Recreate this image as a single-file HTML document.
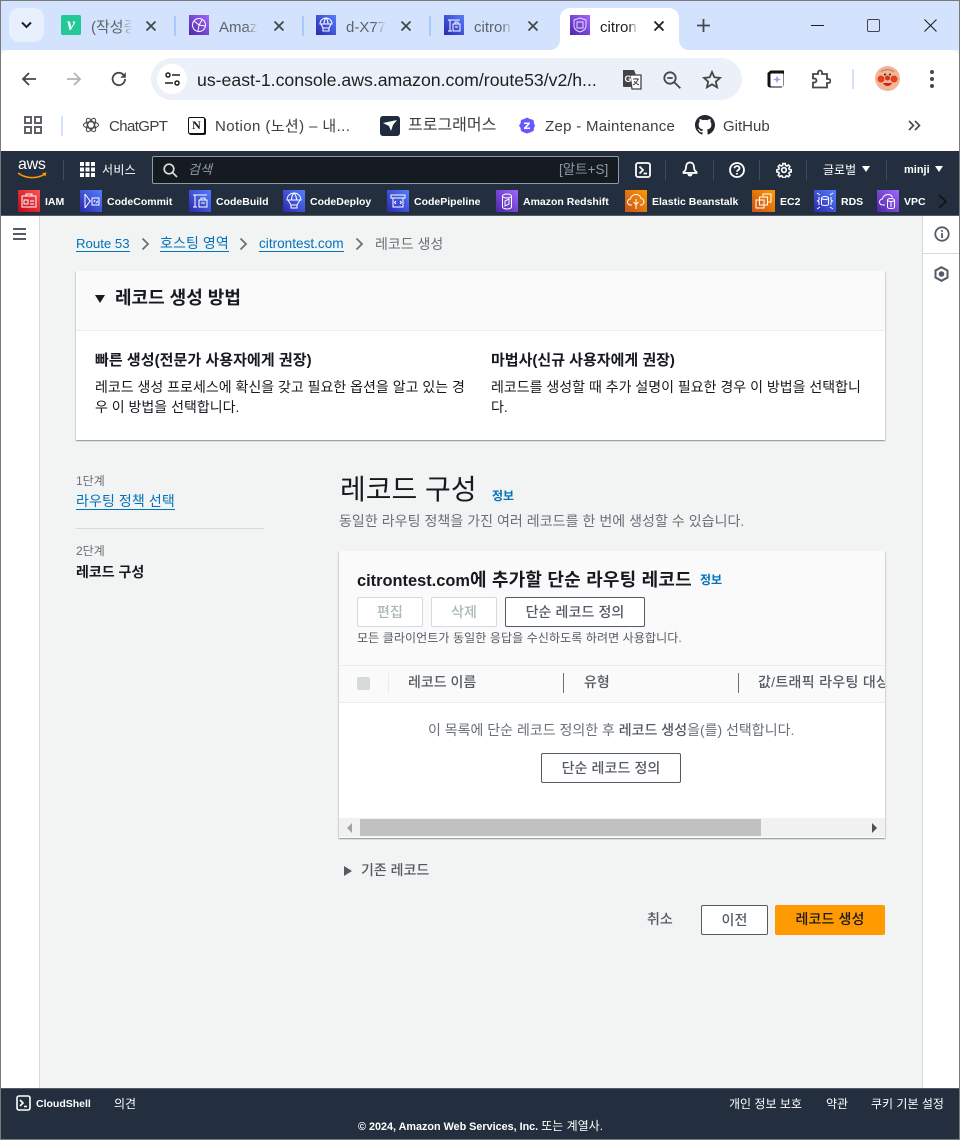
<!DOCTYPE html>
<html lang="ko"><head><meta charset="utf-8"><title>citron</title>
<style>
*{box-sizing:border-box}
html,body{margin:0;padding:0;width:960px;height:1140px;overflow:hidden;background:#f2f3f3}
body{position:relative;font-family:"Liberation Sans","Noto Sans CJK KR",sans-serif;font-size:14px;color:#16191f}
.b,.t,svg.a{position:absolute}
.t{white-space:nowrap;line-height:20px;height:20px}
.fade{overflow:hidden}
.fade:after{content:"";position:absolute;right:0;top:0;bottom:0;width:12px;background:linear-gradient(90deg,rgba(211,227,253,0),#d3e3fd)}
.ic{position:absolute;width:22px;height:22px;top:190px}
.fav{color:#fff;font-size:10.500px;font-weight:bold;top:192px}
.lnk{color:#0073bb;border-bottom:1px solid #0073bb;height:auto;line-height:15px;padding-top:1px}
.btn{position:absolute;background:#fff;border-radius:2px;text-align:center;font-weight:500;font-size:14px;letter-spacing:.1px}
.bm{font-size:15px;color:#3c4043;top:117px}
.nav{color:#fff;font-size:12px;font-weight:normal}
.sep{position:absolute;width:1px;background:#414d5c}
.tabsep{position:absolute;width:2px;height:20px;top:16px;background:#a8c7fa;border-radius:1px}
</style></head><body>

<!-- Tab strip -->
<div class="b" style="left:0;top:0;width:960px;height:50px;background:#d3e3fd"></div>
<div class="b" style="left:9px;top:8px;width:35px;height:34px;border-radius:10px;background:#e9f0fd"></div>
<svg class="a" style="left:20px;top:20px" width="13" height="10" viewBox="0 0 13 10"><path d="M2 2.500l4.500 4.500 4.500-4.500" fill="none" stroke="#1f1f1f" stroke-width="2"/></svg>

<div class="b" style="left:61px;top:15px;width:20px;height:20px;background:#20c997;border-radius:2px;color:#fff;font:italic bold 18px/18px 'Liberation Serif',serif;text-align:center">v</div>
<div class="t fade" style="left:91px;top:18px;width:41px;color:#5f6368;font-size:15px">(작성중)</div>
<svg class="a" style="left:145px;top:20px" width="12" height="12" viewBox="0 0 12 12"><path d="M1.500 1.500l9 9M10.500 1.500l-9 9" stroke="#474747" stroke-width="1.800"/></svg>
<div class="tabsep" style="left:174px"></div>

<div class="b" style="left:189px;top:15px;width:20px;height:20px;background:linear-gradient(45deg,#4d27a8,#a166ff)"></div>
<svg class="a" style="left:189px;top:15px" width="20" height="20" viewBox="0 0 20 20" fill="none" stroke="#fff" stroke-width="1"><circle cx="10" cy="10" r="6.500"/><path d="M5 6l5 4 3-5M10 10l-1 6M10 10l6 1"/></svg>
<div class="t fade" style="left:219px;top:18px;width:39px;color:#5f6368;font-size:15px">Amazon</div>
<svg class="a" style="left:273px;top:20px" width="12" height="12" viewBox="0 0 12 12"><path d="M1.500 1.500l9 9M10.500 1.500l-9 9" stroke="#474747" stroke-width="1.800"/></svg>
<div class="tabsep" style="left:302px"></div>

<div class="b" style="left:316px;top:15px;width:20px;height:20px;background:linear-gradient(45deg,#2e27ad,#527fff)"></div>
<svg class="a" style="left:316px;top:15px" width="20" height="20" viewBox="0 0 20 20" fill="none" stroke="#fff" stroke-width="1.100"><path d="M4 9a6 6 0 0 1 12 0zM8 9c0-3 1-5 2-6 1 1 2 3 2 6M5 9l2 4h6l2-4M7 13v3h6v-3"/></svg>
<div class="t fade" style="left:346px;top:18px;width:40px;color:#5f6368;font-size:15px">d-X77XX</div>
<svg class="a" style="left:400px;top:20px" width="12" height="12" viewBox="0 0 12 12"><path d="M1.500 1.500l9 9M10.500 1.500l-9 9" stroke="#474747" stroke-width="1.800"/></svg>
<div class="tabsep" style="left:429px"></div>

<div class="b" style="left:444px;top:15px;width:20px;height:20px;background:linear-gradient(45deg,#2e27ad,#527fff)"></div>
<svg class="a" style="left:444px;top:15px" width="20" height="20" viewBox="0 0 20 20" fill="none" stroke="#fff" stroke-width="1"><path d="M4 5h12M6 5v11M4 16h4M9 9h7v7H9zM11 9V7h3v2M11 12h3"/></svg>
<div class="t fade" style="left:474px;top:18px;width:39px;color:#5f6368;font-size:15px">citron</div>
<svg class="a" style="left:527px;top:20px" width="12" height="12" viewBox="0 0 12 12"><path d="M1.500 1.500l9 9M10.500 1.500l-9 9" stroke="#474747" stroke-width="1.800"/></svg>

<!-- active tab -->
<div class="b" style="left:560px;top:8px;width:119px;height:43px;background:#fff;border-radius:10px 10px 0 0"></div>
<svg class="a" style="left:550px;top:40px" width="10" height="10" viewBox="0 0 10 10"><path d="M0 10a10 10 0 0 0 10-10v10z" fill="#fff"/></svg>
<svg class="a" style="left:679px;top:40px" width="10" height="10" viewBox="0 0 10 10"><path d="M10 10a10 10 0 0 1-10-10v10z" fill="#fff"/></svg>
<div class="b" style="left:570px;top:15px;width:20px;height:20px;background:linear-gradient(45deg,#4d27a8,#a166ff)"></div>
<svg class="a" style="left:570px;top:15px" width="20" height="20" viewBox="0 0 20 20" fill="none" stroke="#e8dcff" stroke-width="1"><path d="M10 3l6 2v6c0 3-3 5-6 6-3-1-6-3-6-6V5zM7 7h6v6H7z"/></svg>
<div class="t" style="left:600px;top:18px;width:38px;overflow:hidden;color:#1f1f1f;font-size:15px;-webkit-mask-image:linear-gradient(90deg,#000 75%,transparent)">citrontest</div>
<svg class="a" style="left:653px;top:20px" width="12" height="12" viewBox="0 0 12 12"><path d="M1.500 1.500l9 9M10.500 1.500l-9 9" stroke="#1f1f1f" stroke-width="1.800"/></svg>
<svg class="a" style="left:696px;top:18px" width="15" height="15" viewBox="0 0 15 15"><path d="M7.500 1v13M1 7.500h13" stroke="#474747" stroke-width="1.800"/></svg>

<!-- window controls -->
<div class="b" style="left:811px;top:25px;width:13px;height:1px;background:#1f1f1f"></div>
<div class="b" style="left:867px;top:19px;width:13px;height:13px;border:1.500px solid #444;border-radius:2px"></div>
<svg class="a" style="left:924px;top:19px" width="13" height="13" viewBox="0 0 13 13"><path d="M.5.5l12 12M12.500.5l-12 12" stroke="#1f1f1f" stroke-width="1.100"/></svg>

<!-- Toolbar -->
<div class="b" style="left:1px;top:50px;width:958px;height:101px;background:#fff;border-radius:8px 8px 0 0"></div>
<svg class="a" style="left:20px;top:70px" width="18" height="18" viewBox="0 0 18 18"><path d="M16 9H3M9 3L3 9l6 6" fill="none" stroke="#474747" stroke-width="1.800"/></svg>
<svg class="a" style="left:65px;top:70px" width="18" height="18" viewBox="0 0 18 18"><path d="M2 9h13M9 3l6 6-6 6" fill="none" stroke="#b0b3b6" stroke-width="1.800"/></svg>
<svg class="a" style="left:110px;top:70px" width="18" height="18" viewBox="0 0 18 18"><path d="M15 9a6.200 6.200 0 1 1-1.800-4.400L15 6.500" fill="none" stroke="#474747" stroke-width="1.800"/><path d="M15.800 2.200v5.500h-5.500z" fill="#474747"/></svg>

<div class="b" style="left:151px;top:58px;width:591px;height:42px;border-radius:21px;background:#ecf1f9"></div>
<div class="b" style="left:157px;top:64px;width:30px;height:30px;border-radius:15px;background:#fff"></div>
<svg class="a" style="left:164px;top:71px" width="17" height="16" viewBox="0 0 17 16" fill="none" stroke="#1f1f1f" stroke-width="1.500"><circle cx="4" cy="4" r="2"/><path d="M8 4h8M1 12h8"/><circle cx="13" cy="12" r="2"/></svg>
<div class="t" style="left:197px;top:70px;font-size:17.680px;color:#1f1f1f">us-east-1.console.aws.amazon.com/route53/v2/h...</div>

<svg class="a" style="left:621px;top:69px" width="22" height="22" viewBox="0 0 22 22"><path d="M2 1h11l2 5v12H3a1 1 0 0 1-1-1z" fill="#444"/><path d="M9 6h11v14H11z" fill="#fff" stroke="#444" stroke-width="1.300"/><text x="3.500" y="13" font-size="9" font-weight="bold" fill="#fff" font-family="Liberation Sans">G</text><path d="M12 10h6M15 9v1M17 10c-1 3-3 5-5 6M13 12c1 2 3 3 5 4" fill="none" stroke="#444"/></svg>
<svg class="a" style="left:662px;top:70px" width="20" height="20" viewBox="0 0 20 20" fill="none" stroke="#474747" stroke-width="1.800"><circle cx="8" cy="8" r="5.700"/><path d="M5.300 8h5.400M12.300 12.300l6 6"/></svg>
<svg class="a" style="left:702px;top:70px" width="20" height="19" viewBox="0 0 20 19"><path d="M10 2l2.400 5.300 5.700.6-4.300 3.800 1.300 5.600-5.100-3-5.100 3 1.300-5.600L2 7.900l5.700-.6z" fill="none" stroke="#474747" stroke-width="1.800"/></svg>

<svg class="a" style="left:766px;top:69px" width="20" height="20" viewBox="0 0 20 20"><path d="M1.500 4l3-2.500H18v15l-2.500 2H4a2.500 2.500 0 0 1-2.500-2.500z" fill="#111"/><rect x="4.500" y="4.500" width="13" height="13" rx="1" fill="#fff"/><path d="M11 6.500l1 3 3 1-3 1-1 3-1-3-3-1 3-1z" fill="#b78bf5"/></svg>
<svg class="a" style="left:811px;top:69px" width="20" height="20" viewBox="0 0 20 20"><path d="M2 5h5V3.500a2 2 0 0 1 4 0V5h5v5h1.500a2 2 0 0 1 0 4H16v4.500H2v-5h1.500a2 2 0 0 0 0-4H2z" fill="none" stroke="#474747" stroke-width="1.800"/></svg>
<div class="b" style="left:852px;top:69px;width:2px;height:20px;background:#d3e3fd"></div>
<svg class="a" style="left:875px;top:66px" width="25" height="25" viewBox="0 0 25 25"><circle cx="12.500" cy="12.500" r="12.500" fill="#f2b596"/><path d="M6 6c2-3 11-3 13 0" fill="none" stroke="#b9745a"/><circle cx="6" cy="13" r="3.500" fill="#e2401f"/><circle cx="19" cy="13" r="3.500" fill="#e2401f"/><circle cx="12.500" cy="12" r="2.500" fill="#d8321a"/><path d="M8 17c2 4 7 4 9 0z" fill="#c22"/><circle cx="10" cy="8.500" r="1" fill="#222"/><circle cx="15" cy="8.500" r="1" fill="#222"/></svg>
<div class="b" style="left:930px;top:70px;width:4px;height:4px;border-radius:2px;background:#474747"></div>
<div class="b" style="left:930px;top:77px;width:4px;height:4px;border-radius:2px;background:#474747"></div>
<div class="b" style="left:930px;top:84px;width:4px;height:4px;border-radius:2px;background:#474747"></div>

<!-- Bookmarks -->
<svg class="a" style="left:24px;top:116px" width="19" height="19" viewBox="0 0 19 19" fill="none" stroke="#5f6368" stroke-width="2"><rect x="1" y="1" width="6" height="6"/><rect x="11" y="1" width="6" height="6"/><rect x="1" y="11" width="6" height="6"/><rect x="11" y="11" width="6" height="6"/></svg>
<div class="b" style="left:61px;top:116px;width:2px;height:20px;background:#d3e3fd"></div>
<svg class="a" style="left:83px;top:117px" width="16" height="16" viewBox="0 0 16 16" fill="none" stroke="#444" stroke-width="1"><circle cx="8" cy="8" r="3.500"/><ellipse cx="8" cy="8" rx="7.500" ry="3.200"/><ellipse cx="8" cy="8" rx="7.500" ry="3.200" transform="rotate(60 8 8)"/><ellipse cx="8" cy="8" rx="7.500" ry="3.200" transform="rotate(120 8 8)"/></svg>
<div class="t bm" style="left:109px;letter-spacing:-.6px">ChatGPT</div>
<div class="b" style="left:188px;top:117px;width:17px;height:17px;background:#fff;border:1.500px solid #111;border-radius:2px;box-shadow:1px 1px 0 #111;font:bold 12px/14px 'Liberation Serif',serif;text-align:center;color:#111">N</div>
<div class="t bm" style="left:215px;letter-spacing:.4px">Notion (노션) – 내...</div>
<div class="b" style="left:380px;top:116px;width:20px;height:20px;background:#202b3d;border-radius:3px"></div>
<svg class="a" style="left:380px;top:116px" width="20" height="20" viewBox="0 0 20 20"><path d="M3 7l14-3-4 5-2 6-2-5z" fill="#fff"/></svg>
<div class="t bm" style="left:408px;top:116px;font-size:16px">프로그래머스</div>
<svg class="a" style="left:519px;top:117px" width="16" height="17" viewBox="0 0 16 17"><path d="M8 .5l3 1.500 3.500 1 .5 3.500 1 2-1 2.500-.5 3-3.500 1.500L8 16.500l-3-1-3-1.500-.5-3L0 8.500l1.500-2L2 3l3-1z" fill="#6758ff"/><path d="M5 5.500h6v1.300L7.500 10.500H11V12H5v-1.300l3.500-3.700H5z" fill="#fff"/></svg>
<div class="t bm" style="left:545px;letter-spacing:.3px">Zep - Maintenance</div>
<svg class="a" style="left:695px;top:115px" width="20" height="20" viewBox="0 0 16 16"><path fill="#24292f" d="M8 0C3.580 0 0 3.580 0 8c0 3.540 2.290 6.530 5.470 7.590.4.070.55-.17.55-.38 0-.19-.01-.82-.01-1.490-2.010.37-2.530-.49-2.690-.94-.09-.23-.48-.94-.82-1.130-.28-.15-.68-.52-.01-.53.630-.01 1.080.58 1.230.82.720 1.210 1.870.870 2.330.660.070-.52.280-.870.510-1.070-1.780-.2-3.640-.89-3.640-3.950 0-.87.310-1.590.820-2.150-.08-.2-.36-1.020.08-2.120 0 0 .67-.21 2.200.820.640-.18 1.320-.27 2-.27s1.360.09 2 .27c1.530-1.040 2.200-.82 2.200-.82.440 1.100.160 1.920.080 2.120.510.560.820 1.270.820 2.150 0 3.070-1.870 3.750-3.650 3.950.29.250.54.730.54 1.480 0 1.070-.01 1.930-.01 2.200 0 .21.150.46.550.38A8.013 8.013 0 0 0 16 8c0-4.420-3.580-8-8-8z"/></svg>
<div class="t bm" style="left:723px">GitHub</div>
<svg class="a" style="left:908px;top:120px" width="13" height="11" viewBox="0 0 13 11" fill="none" stroke="#474747" stroke-width="1.600"><path d="M1 1l4.500 4.500L1 10M7 1l4.500 4.500L7 10"/></svg>

<!-- AWS nav -->
<div class="b" style="left:0;top:151px;width:960px;height:65px;background:#232f3e;border-bottom:1px solid #545b64"></div>
<div class="t" style="left:18px;top:156px;color:#fff;font-size:16px;font-weight:normal;letter-spacing:-.3px;line-height:18px;height:18px">aws</div>
<svg class="a" style="left:17px;top:172px" width="31" height="8" viewBox="0 0 31 8"><path d="M1 1c8 6 19 6 27 1" fill="none" stroke="#f90" stroke-width="1.600"/><path d="M25 1l4.500-.5-1 4z" fill="#f90"/></svg>
<div class="sep" style="left:63px;top:160px;height:20px"></div>
<svg class="a" style="left:80px;top:162px" width="15" height="15" viewBox="0 0 15 15" fill="#fff"><rect width="4" height="4"/><rect x="5.500" width="4" height="4"/><rect x="11" width="4" height="4"/><rect y="5.500" width="4" height="4"/><rect x="5.500" y="5.500" width="4" height="4"/><rect x="11" y="5.500" width="4" height="4"/><rect y="11" width="4" height="4"/><rect x="5.500" y="11" width="4" height="4"/><rect x="11" y="11" width="4" height="4"/></svg>
<div class="t nav" style="left:102px;top:160px;letter-spacing:.3px">서비스</div>
<div class="b" style="left:152px;top:156px;width:467px;height:28px;background:#161b22;border:1px solid #8d9aa7;border-radius:2px"></div>
<svg class="a" style="left:163px;top:163px" width="15" height="15" viewBox="0 0 15 15" fill="none" stroke="#d5dbdb" stroke-width="1.700"><circle cx="6" cy="6" r="4.800"/><path d="M9.500 9.500l4.500 4.500"/></svg>
<div class="t" style="left:188px;top:160px;color:#8d9aa7;font-size:13px;font-style:italic">검색</div>
<div class="t" style="left:559px;top:160px;color:#8d9aa7;font-size:13.500px">[알트+S]</div>

<svg class="a" style="left:635px;top:162px" width="16" height="16" viewBox="0 0 16 16" fill="none" stroke="#fff" stroke-width="1.800"><rect x="1" y="1" width="14" height="14" rx="2"/><path d="M4.500 4.500L8 8l-3.500 3.500M8.500 11.500H12"/></svg>
<div class="sep" style="left:665px;top:160px;height:20px"></div>
<svg class="a" style="left:682px;top:161px" width="16" height="17" viewBox="0 0 16 17"><path d="M8 1.500c3 0 4 2.500 4 5 0 2 1 3.500 2.500 4.500v1H1.500v-1C3 10 4 8.500 4 6.500c0-2.500 1-5 4-5z" fill="none" stroke="#fff" stroke-width="1.800"/><path d="M5.500 13h5a2.500 2.500 0 0 1-5 0z" fill="#fff"/><path d="M1.500 11h13v1.500h-13z" fill="#fff"/></svg>
<div class="sep" style="left:713px;top:160px;height:20px"></div>
<svg class="a" style="left:729px;top:162px" width="16" height="16" viewBox="0 0 16 16" fill="none" stroke="#fff" stroke-width="1.800"><circle cx="8" cy="8" r="7"/><path d="M5.500 6.200C5.500 4.800 6.700 4 8 4s2.500.8 2.500 2.200c0 1.800-2.500 1.800-2.500 3.600"/><path d="M8 11v1.500"/></svg>
<div class="sep" style="left:759px;top:160px;height:20px"></div>
<svg class="a" style="left:776px;top:162px" width="16" height="16" viewBox="0 0 16 16" fill="none" stroke="#fff" stroke-width="1.700"><circle cx="8" cy="8" r="2.300"/><path d="M6.800 1h2.400l.4 2 1.300.6 1.800-1 1.600 1.700-1.100 1.700.5 1.300 2 .4v2.400l-2 .4-.5 1.300 1.100 1.700-1.600 1.700-1.800-1-1.300.6-.4 2H6.800l-.4-2-1.300-.6-1.800 1-1.600-1.700 1.100-1.700-.5-1.300-2-.4V7.700l2-.4.5-1.300L1.700 4.300l1.600-1.700 1.800 1 1.300-.6z" transform="translate(.6 .6) scale(.93)"/></svg>
<div class="sep" style="left:806px;top:160px;height:20px"></div>
<div class="t nav" style="left:823px;top:160px">글로벌</div>
<svg class="a" style="left:862px;top:166px" width="8" height="6" viewBox="0 0 8 6"><path d="M0 0h8L4 6z" fill="#fff"/></svg>
<div class="sep" style="left:886px;top:160px;height:20px"></div>
<div class="t nav" style="left:904px;top:160px;font-size:11px;font-weight:bold">minji</div>
<svg class="a" style="left:935px;top:166px" width="8" height="6" viewBox="0 0 8 6"><path d="M0 0h8L4 6z" fill="#fff"/></svg>

<!-- favorites -->
<div class="ic" style="left:18px;background:linear-gradient(45deg,#bd0816,#ff5252)"></div>
<svg class="ic" style="left:18px" viewBox="0 0 22 22" fill="none" stroke="#fff" stroke-width="1"><rect x="4" y="6" width="14" height="11"/><rect x="6" y="10" width="4" height="4"/><path d="M8 6V4h6v2M12 11h4M12 14h4"/></svg>
<div class="t fav" style="left:45px">IAM</div>
<div class="ic" style="left:80px;background:linear-gradient(45deg,#2e27ad,#527fff)"></div>
<svg class="ic" style="left:80px" viewBox="0 0 22 22" fill="none" stroke="#fff" stroke-width="1"><path d="M5 4l5 7-5 7M5 4v14M10 11h1M12 8h7v7h-7zM14 12l1-2M16 13l2-2"/></svg>
<div class="t fav" style="left:107px">CodeCommit</div>
<div class="ic" style="left:189px;background:linear-gradient(45deg,#2e27ad,#527fff)"></div>
<svg class="ic" style="left:189px" viewBox="0 0 22 22" fill="none" stroke="#fff" stroke-width="1"><path d="M4 5h14M6 5v12M4 17h4M10 10h8v7h-8zM12 10V8h4v2M12 13h4"/></svg>
<div class="t fav" style="left:216px">CodeBuild</div>
<div class="ic" style="left:283px;background:linear-gradient(45deg,#2e27ad,#527fff)"></div>
<svg class="ic" style="left:283px" viewBox="0 0 22 22" fill="none" stroke="#fff" stroke-width="1"><path d="M4 10a7 7 0 0 1 14 0zM8.500 10c0-3 1-5.500 2.500-7 1.500 1.500 2.500 4 2.500 7M5 10l3 5h6l3-5M8 15v3h6v-3"/></svg>
<div class="t fav" style="left:310px">CodeDeploy</div>
<div class="ic" style="left:387px;background:linear-gradient(45deg,#2e27ad,#527fff)"></div>
<svg class="ic" style="left:387px" viewBox="0 0 22 22" fill="none" stroke="#fff" stroke-width="1"><path d="M4 5h14v3H4zM6 8v9h10V8M9 11l-1.500 1.500L9 14M13 11l1.500 1.500L13 14"/></svg>
<div class="t fav" style="left:414px">CodePipeline</div>
<div class="ic" style="left:496px;background:linear-gradient(45deg,#4d27a8,#a166ff)"></div>
<svg class="ic" style="left:496px" viewBox="0 0 22 22" fill="none" stroke="#fff" stroke-width="1"><ellipse cx="11" cy="6" rx="4.500" ry="2"/><path d="M6.500 6v11c0 1 2 2 4.500 2s4.500-1 4.500-2V6M9 11l4-2v5l-4 2z"/></svg>
<div class="t fav" style="left:523px">Amazon Redshift</div>
<div class="ic" style="left:625px;background:linear-gradient(45deg,#c8511b,#ff9900)"></div>
<svg class="ic" style="left:625px" viewBox="0 0 22 22" fill="none" stroke="#fff" stroke-width="1"><path d="M7 15H5.500a3 3 0 0 1 0-6c.5-3 3-4.500 5.500-4.500s4.500 1.500 5 4a3.300 3.300 0 0 1 .5 6.500H15M11 9v10M8.500 12l2.500 2.500 2.500-2.500"/></svg>
<div class="t fav" style="left:652px">Elastic Beanstalk</div>
<div class="ic" style="left:752px;width:23px;background:linear-gradient(45deg,#c8511b,#ff9900)"></div>
<svg class="ic" style="left:752px" viewBox="0 0 22 22" fill="none" stroke="#fff" stroke-width="1"><rect x="4" y="10" width="8" height="8"/><rect x="7.500" y="7" width="8" height="8"/><path d="M11 7V4h8v8h-3"/></svg>
<div class="t fav" style="left:780px">EC2</div>
<div class="ic" style="left:814px;background:linear-gradient(45deg,#2e27ad,#527fff)"></div>
<svg class="ic" style="left:814px" viewBox="0 0 22 22" fill="none" stroke="#fff" stroke-width="1"><ellipse cx="11" cy="8" rx="3.500" ry="1.500"/><path d="M7.500 8v6c0 1 1.500 1.500 3.500 1.500s3.500-.5 3.500-1.500V8M5 7v3l-1.500 1L5 12v3M17 7v3l1.500 1-1.500 1v3M3 3l3 2M19 3l-3 2M3 19l3-2M19 19l-3-2"/></svg>
<div class="t fav" style="left:841px">RDS</div>
<div class="ic" style="left:877px;background:linear-gradient(45deg,#4d27a8,#a166ff)"></div>
<svg class="ic" style="left:877px" viewBox="0 0 22 22" fill="none" stroke="#fff" stroke-width="1"><path d="M8 15H5.500a3 3 0 0 1 0-6C6 6 8.500 4.500 11 4.500s4 1.500 4.500 3"/><ellipse cx="14" cy="10" rx="3.500" ry="1.500"/><path d="M10.500 10v7c0 1 1.500 1.500 3.500 1.500s3.500-.5 3.500-1.500v-7M14 12v5"/></svg>
<div class="t fav" style="left:904px">VPC</div>
<svg class="a" style="left:938px;top:194px" width="10" height="15" viewBox="0 0 10 15"><path d="M1 1l7 6.500L1 14" fill="none" stroke="#0f1419" stroke-width="1.600"/></svg>

<!-- Side rails -->
<div class="b" style="left:0;top:216px;width:40px;height:872px;background:#fff;border-right:1px solid #d5dbdb"></div>
<div class="b" style="left:922px;top:216px;width:38px;height:872px;background:#fff;border-left:1px solid #d5dbdb"></div>
<div class="b" style="left:923px;top:253px;width:37px;height:1px;background:#d5dbdb"></div>
<svg class="a" style="left:12px;top:227px" width="15" height="14" viewBox="0 0 15 14"><path d="M1 2h13M1 7h13M1 12h13" stroke="#545b64" stroke-width="2"/></svg>
<svg class="a" style="left:934px;top:226px" width="16" height="16" viewBox="0 0 16 16" fill="none" stroke="#545b64" stroke-width="1.800"><circle cx="8" cy="8" r="6.700"/><path d="M8 7v5M8 4v1.800"/></svg>
<svg class="a" style="left:934px;top:266px" width="15" height="16" viewBox="0 0 15 16" fill="none" stroke="#545b64" stroke-width="2"><path d="M7.500 1.200l6 3.300v7l-6 3.300-6-3.300v-7z"/><circle cx="7.500" cy="8" r="1.800" fill="#545b64"/></svg>

<!-- Breadcrumbs -->
<div class="t lnk" style="left:76px;top:235px;font-size:13.200px">Route 53</div>
<svg class="a" style="left:141px;top:237px" width="9" height="14" viewBox="0 0 9 14"><path d="M1.500 1.500L7 7l-5.500 5.500" fill="none" stroke="#687078" stroke-width="1.800"/></svg>
<div class="t lnk" style="left:160px;top:235px;font-size:14px;letter-spacing:.1px">호스팅 영역</div>
<svg class="a" style="left:239px;top:237px" width="9" height="14" viewBox="0 0 9 14"><path d="M1.500 1.500L7 7l-5.500 5.500" fill="none" stroke="#687078" stroke-width="1.800"/></svg>
<div class="t lnk" style="left:259px;top:235px;font-size:13.600px">citrontest.com</div>
<svg class="a" style="left:355px;top:237px" width="9" height="14" viewBox="0 0 9 14"><path d="M1.500 1.500L7 7l-5.500 5.500" fill="none" stroke="#687078" stroke-width="1.800"/></svg>
<div class="t" style="left:375px;top:234px;font-size:14px;color:#687078">레코드 생성</div>

<!-- Method panel -->
<div class="b" style="left:76px;top:271px;width:809px;height:169px;background:#fff;box-shadow:0 1px 1px 0 rgba(0,28,36,.3),1px 1px 1px 0 rgba(0,28,36,.1),-1px 1px 1px 0 rgba(0,28,36,.1)"></div>
<div class="b" style="left:76px;top:271px;width:809px;height:60px;background:#fafafa;border-bottom:1px solid #eaeded"></div>
<svg class="a" style="left:95px;top:295px" width="10" height="8" viewBox="0 0 10 8"><path d="M0 0h10L5 8z" fill="#16191f"/></svg>
<div class="t" style="left:115px;top:288px;font-size:18px;font-weight:bold">레코드 생성 방법</div>
<div class="t" style="left:95px;top:351px;font-size:15px;font-weight:bold;letter-spacing:.05px">빠른 생성(전문가 사용자에게 권장)</div>
<div class="t" style="left:95px;top:377px;font-size:14px">레코드 생성 프로세스에 확신을 갖고 필요한 옵션을 알고 있는 경</div>
<div class="t" style="left:95px;top:397px;font-size:14px">우 이 방법을 선택합니다.</div>
<div class="t" style="left:491px;top:351px;font-size:15px;font-weight:bold">마법사(신규 사용자에게 권장)</div>
<div class="t" style="left:491px;top:377px;font-size:14px">레코드를 생성할 때 추가 설명이 필요한 경우 이 방법을 선택합니</div>
<div class="t" style="left:491px;top:397px;font-size:14px">다.</div>

<!-- Steps -->
<div class="t" style="left:76px;top:471px;font-size:12px;color:#687078">1단계</div>
<div class="t lnk" style="left:76px;top:492px;font-size:14px;line-height:16px;letter-spacing:.1px">라우팅 정책 선택</div>
<div class="b" style="left:76px;top:528px;width:188px;height:1px;background:#d5dbdb"></div>
<div class="t" style="left:76px;top:541px;font-size:12px;color:#687078">2단계</div>
<div class="t" style="left:76px;top:562px;font-size:14px;font-weight:bold">레코드 구성</div>

<!-- Title -->
<div class="t" style="left:340px;top:475px;font-size:28px;line-height:30px;height:30px">레코드 구성</div>
<div class="t" style="left:492px;top:486px;font-size:12px;font-weight:bold;color:#0073bb">정보</div>
<div class="t" style="left:339px;top:511px;font-size:14px;color:#687078;letter-spacing:.05px">동일한 라우팅 정책을 가진 여러 레코드를 한 번에 생성할 수 있습니다.</div>

<!-- Card -->
<div class="b" style="left:339px;top:551px;width:546px;height:287px;background:#fff;box-shadow:0 1px 1px 0 rgba(0,28,36,.3),1px 1px 1px 0 rgba(0,28,36,.1),-1px 1px 1px 0 rgba(0,28,36,.1)"></div>
<div class="b" style="left:339px;top:551px;width:546px;height:152px;background:#fafafa;border-bottom:1px solid #eaeded"></div>
<div class="b" style="left:339px;top:665px;width:546px;height:1px;background:#eaeded"></div>
<div class="t" style="left:357px;top:570px;font-size:16.400px;font-weight:bold">citrontest.com<span style="font-size:18px;letter-spacing:.2px">에 추가할 단순 라우팅 레코드</span></div>
<div class="t" style="left:700px;top:570px;font-size:12px;font-weight:bold;color:#0073bb">정보</div>
<div class="btn" style="left:357px;top:597px;width:66px;height:30px;border:1px solid #d5dbdb;color:#aab7b8;line-height:28px">편집</div>
<div class="btn" style="left:431px;top:597px;width:66px;height:30px;border:1px solid #d5dbdb;color:#aab7b8;line-height:28px">삭제</div>
<div class="btn" style="left:505px;top:597px;width:140px;height:30px;border:1px solid #545b64;color:#545b64;line-height:28px">단순 레코드 정의</div>
<div class="t" style="left:357px;top:628px;font-size:12px;color:#545b64;letter-spacing:.1px">모든 클라이언트가 동일한 응답을 수신하도록 하려면 사용합니다.</div>

<div class="b" style="left:357px;top:677px;width:13px;height:13px;background:#d5dbdb;border-radius:2px"></div>
<div class="b" style="left:388px;top:673px;width:1px;height:20px;background:#eaeded"></div>
<div class="t" style="left:408px;top:672px;font-size:14px;font-weight:500;color:#545b64">레코드 이름</div>
<div class="b" style="left:563px;top:673px;width:1px;height:20px;background:#687078"></div>
<div class="t" style="left:584px;top:672px;font-size:14px;font-weight:500;color:#545b64">유형</div>
<div class="b" style="left:738px;top:673px;width:1px;height:20px;background:#687078"></div>
<div class="t" style="left:758px;top:672px;width:127px;overflow:hidden;font-size:14px;font-weight:500;color:#545b64;letter-spacing:.3px">값/트래픽 라우팅 대상</div>

<div class="t" style="left:428px;top:720px;font-size:14px;color:#687078">이 목록에 단순 레코드 정의한 후 <b style="color:#545b64;font-weight:500">레코드 생성</b>을(를) 선택합니다.</div>
<div class="btn" style="left:541px;top:753px;width:140px;height:30px;border:1px solid #545b64;color:#545b64;line-height:28px">단순 레코드 정의</div>

<!-- Scrollbar -->
<div class="b" style="left:339px;top:818px;width:546px;height:19px;background:#f1f1f1"></div>
<div class="b" style="left:360px;top:819px;width:401px;height:17px;background:#c1c1c1"></div>
<svg class="a" style="left:346px;top:823px" width="7" height="10" viewBox="0 0 7 10"><path d="M6 0v10L1 5z" fill="#a3a3a3"/></svg>
<svg class="a" style="left:871px;top:823px" width="7" height="10" viewBox="0 0 7 10"><path d="M1 0v10l5-5z" fill="#505050"/></svg>

<!-- Existing records -->
<svg class="a" style="left:344px;top:866px" width="8" height="10" viewBox="0 0 8 10"><path d="M0 0v10l8-5z" fill="#545b64"/></svg>
<div class="t" style="left:361px;top:860px;font-size:14px;font-weight:500;color:#545b64">기존 레코드</div>

<!-- Actions -->
<div class="t" style="left:647px;top:909px;font-size:14px;font-weight:500;color:#545b64">취소</div>
<div class="btn" style="left:701px;top:905px;width:67px;height:30px;border:1px solid #545b64;color:#545b64;line-height:28px">이전</div>
<div class="btn" style="left:775px;top:905px;width:110px;height:30px;background:#ff9900;color:#16191f;line-height:29px">레코드 생성</div>

<!-- Footer -->
<div class="b" style="left:0;top:1088px;width:960px;height:52px;background:#232f3e;border-top:1px solid #545b64"></div>
<svg class="a" style="left:16px;top:1095px" width="15" height="16" viewBox="0 0 15 16" fill="none" stroke="#fff" stroke-width="1.600"><rect x="1" y="1" width="13" height="14" rx="2"/><path d="M4 5l3 3-3 3M8 11.500h3"/></svg>
<div class="t" style="left:36px;top:1094px;font-size:10.500px;font-weight:bold;color:#fff">CloudShell</div>
<div class="t" style="left:114px;top:1094px;font-size:12px;color:#fff">의견</div>
<div class="t" style="left:729px;top:1094px;font-size:12px;color:#fff">개인 정보 보호</div>
<div class="t" style="left:826px;top:1094px;font-size:12px;color:#fff">약관</div>
<div class="t" style="left:871px;top:1094px;font-size:12px;color:#fff">쿠키 기본 설정</div>
<div class="t" style="left:358px;top:1116px;font-size:10.800px;font-weight:bold;color:#fff">© 2024, Amazon Web Services, Inc. <span style="font-weight:normal;font-size:12px">또는 계열사.</span></div>

<!-- window frame -->
<div class="b" style="left:0;top:0;width:960px;height:1140px;border:1px solid #7a7a7a;pointer-events:none"></div>
</body></html>
